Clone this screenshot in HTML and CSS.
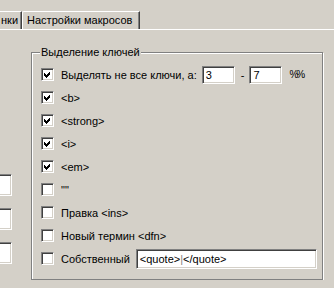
FILE: index.html
```html
<!DOCTYPE html>
<html lang="ru">
  <head>
    <meta charset="UTF-8" />
    <title>Настройки макросов</title>
    <link rel="stylesheet" href="styles.css">
  </head>
  <body>
    <div class="tabs">
      <div class="tab tab-cut">нки</div>
      <div class="tab">Настройки макросов</div>
    </div>

    <div class="panel">
      <div class="side">
        <div class="field side-field"></div>
        <div class="field side-field"></div>
        <div class="field side-field"></div>
      </div>

      <fieldset class="group">
        <legend>Выделение ключей</legend>

        <div class="row">
          <span class="check on"><svg viewBox="0 0 9 9" width="9" height="9"><path d="M1 3l2 2 4-4v3l-4 4-2-2z" /></svg></span>
          <span class="label">Выделять не все ключи, а:</span>
          <div class="field num">3</div>
          <span class="dash">-</span>
          <div class="field num">7</div>
          <span class="pct">%%</span>
        </div>
        <div class="row">
          <span class="check on"><svg viewBox="0 0 9 9" width="9" height="9"><path d="M1 3l2 2 4-4v3l-4 4-2-2z" /></svg></span>
          <span class="label">&lt;b&gt;</span>
        </div>
        <div class="row">
          <span class="check on"><svg viewBox="0 0 9 9" width="9" height="9"><path d="M1 3l2 2 4-4v3l-4 4-2-2z" /></svg></span>
          <span class="label">&lt;strong&gt;</span>
        </div>
        <div class="row">
          <span class="check on"><svg viewBox="0 0 9 9" width="9" height="9"><path d="M1 3l2 2 4-4v3l-4 4-2-2z" /></svg></span>
          <span class="label">&lt;i&gt;</span>
        </div>
        <div class="row">
          <span class="check on"><svg viewBox="0 0 9 9" width="9" height="9"><path d="M1 3l2 2 4-4v3l-4 4-2-2z" /></svg></span>
          <span class="label">&lt;em&gt;</span>
        </div>
        <div class="row">
          <span class="check"></span>
          <span class="label">""</span>
        </div>
        <div class="row">
          <span class="check"></span>
          <span class="label">Правка &lt;ins&gt;</span>
        </div>
        <div class="row">
          <span class="check"></span>
          <span class="label">Новый термин &lt;dfn&gt;</span>
        </div>
        <div class="row">
          <span class="check"></span>
          <span class="label">Собственный</span>
          <div class="field custom">&lt;quote&gt;<span class="caret">|</span>&lt;/quote&gt;</div>
        </div>
      </fieldset>
    </div>
  </body>
</html>
```

FILE: styles.css
```css
body {
  margin: 0;
  background-color: #d4d0c8;
  font-family: "Liberation Sans", Arial, sans-serif;
  font-size: 11px;
  color: #000;
  overflow: hidden;
}

/* tab strip */
.tabs {
  display: flex;
  margin-top: 11px;
  border-bottom: 1px solid #fff;
}

.tab {
  height: 18px;
  line-height: 17px;
  padding: 0 7px 0 4px;
  border-top: 1px solid #fff;
  border-left: 1px solid #fff;
  border-right: 1px solid #404040;
  border-top-left-radius: 2px;
  box-shadow: inset -1px 0 #808080;
  box-sizing: border-box;
}

.tab-cut {
  border-left: none;
  border-top-left-radius: 0;
  padding-left: 1px;
  padding-right: 3px;
}

/* panel */
.panel {
  display: flex;
  align-items: flex-start;
  padding-top: 15px;
}

.side {
  width: 12px;
  margin-top: 129px;
  margin-right: 19px;
  display: flex;
  flex-direction: column;
  align-items: flex-end;
  gap: 12px;
}

.field {
  flex: none;
  box-sizing: border-box;
  background-color: #fff;
  border: 1px solid;
  border-color: #808080 #fff #fff #808080;
  box-shadow: inset 1px 1px #404040, inset -1px -1px #d4d0c8;
  padding-left: 3px;
  white-space: nowrap;
}

.side-field {
  width: 60px;
  height: 22px;
}

/* group box */
.group {
  margin: 0;
  width: 292px;
  box-sizing: border-box;
  padding: 4px 5px 9px 9px;
  border: 1px solid #808080;
  box-shadow: inset 1px 1px #fff, 1px 1px #fff;
}

.group legend {
  margin-left: -1px;
  padding: 0 1px;
  line-height: 14px;
  background-color: #d4d0c8;
}

.row {
  display: flex;
  align-items: center;
  height: 23px;
}

.label {
  white-space: nowrap;
}

.check {
  flex: none;
  width: 13px;
  height: 13px;
  box-sizing: border-box;
  border: 1px solid;
  border-color: #808080 #fff #fff #808080;
  box-shadow: inset 1px 1px #404040, inset -1px -1px #d4d0c8;
  background-color: #fff;
  margin-right: 7px;
  display: flex;
  align-items: center;
  justify-content: center;
}

.check svg {
  display: block;
  shape-rendering: crispEdges;
}

.num {
  width: 33px;
  height: 18px;
  line-height: 16px;
  margin-left: 5px;
}

.dash {
  margin-left: 6px;
}

.pct {
  margin-left: 7px;
  font-size: 10px;
  letter-spacing: -2px;
}

.custom {
  width: 181px;
  height: 20px;
  line-height: 18px;
  margin-left: 6px;
}

.caret {
  color: #808080;
}
```
